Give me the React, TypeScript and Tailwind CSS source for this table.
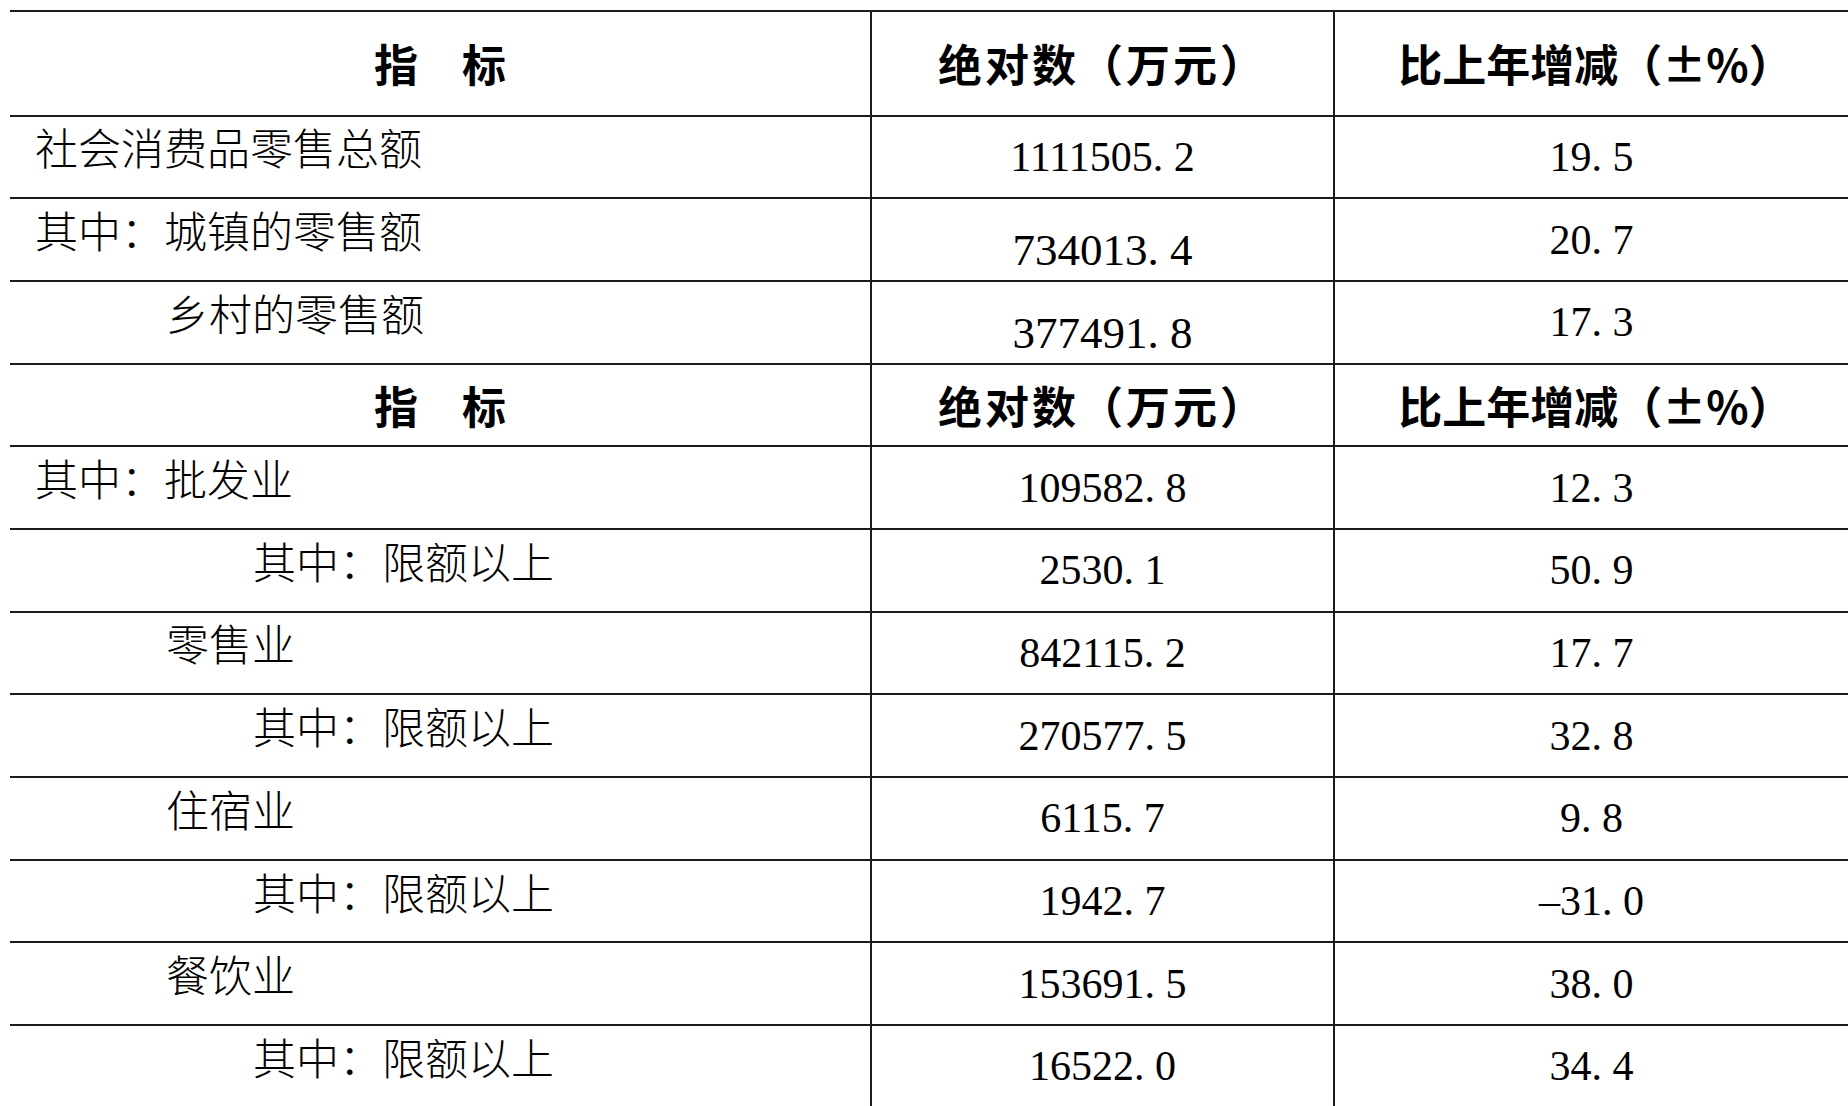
import React from "react";

type RowData = {
  label: string;
  indent?: 0 | 3 | 5;
  num: string;
  pct: string;
  big?: boolean;
};

const CJK = "font-['Noto_Sans_CJK_SC','Noto_Sans',sans-serif]";
const NUM = "font-['Liberation_Serif','DejaVu_Serif',serif]";

function Num({ value, className }: { value: string; className?: string }) {
  const parts = value.split(".");
  return (
    <span className={`${NUM} whitespace-nowrap ${className ?? ""}`}>
      {parts[0]}
      {parts.length > 1 && (
        <>
          <span className="inline-block w-[0.5em] text-left">.</span>
          {parts[1]}
        </>
      )}
    </span>
  );
}

function HeaderRow({ tall }: { tall?: boolean }) {
  return (
    <div
      className={`flex border-b-2 border-[#1c1c1c] ${
        tall ? "h-[107px] border-t-2" : "h-[82.7px]"
      }`}
    >
      <div className={`w-[860px] flex items-center justify-center ${CJK} font-bold text-[44px] text-black`}>
        指　标
      </div>
      <div className={`w-[463px] border-l-2 border-[#1c1c1c] flex items-center justify-center tracking-[3px] ${CJK} font-bold text-[44px] text-black`}>
        绝对数（万元）
      </div>
      <div className={`flex-1 border-l-2 border-[#1c1c1c] flex items-center justify-center pl-[8px] ${CJK} font-bold text-[44px] text-black`}>
        比上年增减（±%）
      </div>
    </div>
  );
}

function DataRow({ row }: { row: RowData }) {
  const indentClass =
    row.indent === 5 ? "pl-[243px]" : row.indent === 3 ? "pl-[156px]" : "pl-[25px]";
  return (
    <div className="flex h-[82.7px] border-b-2 border-[#1c1c1c]">
      <div
        className={`w-[860px] flex items-center pb-[20px] ${indentClass} ${CJK} font-light text-[43px] leading-none text-black whitespace-nowrap`}
      >
        {row.label}
      </div>
      <div
        className={`w-[463px] border-l-2 border-[#1c1c1c] flex items-center justify-center text-black ${
          row.big ? "pt-[22px] text-[45px]" : "text-[42px]"
        }`}
      >
        <Num value={row.num} className="leading-none" />
      </div>
      <div className="flex-1 border-l-2 border-[#1c1c1c] flex items-center justify-center text-black text-[42px]">
        <Num value={row.pct} className="leading-none" />
      </div>
    </div>
  );
}

const group1: RowData[] = [
  { label: "社会消费品零售总额", num: "1111505.2", pct: "19.5" },
  { label: "其中：城镇的零售额", num: "734013.4", pct: "20.7", big: true },
  { label: "乡村的零售额", indent: 3, num: "377491.8", pct: "17.3", big: true },
];

const group2: RowData[] = [
  { label: "其中：批发业", num: "109582.8", pct: "12.3" },
  { label: "其中：限额以上", indent: 5, num: "2530.1", pct: "50.9" },
  { label: "零售业", indent: 3, num: "842115.2", pct: "17.7" },
  { label: "其中：限额以上", indent: 5, num: "270577.5", pct: "32.8" },
  { label: "住宿业", indent: 3, num: "6115.7", pct: "9.8" },
  { label: "其中：限额以上", indent: 5, num: "1942.7", pct: "–31.0" },
  { label: "餐饮业", indent: 3, num: "153691.5", pct: "38.0" },
  { label: "其中：限额以上", indent: 5, num: "16522.0", pct: "34.4" },
];

export default function App() {
  return (
    <div className="w-[1848px] h-[1106px] overflow-hidden bg-white">
      <div className="ml-[10px] mt-[9.5px] w-[1838px] flex flex-col">
        <HeaderRow tall />
        {group1.map((r, i) => (
          <DataRow key={"a" + i} row={r} />
        ))}
        <HeaderRow />
        {group2.map((r, i) => (
          <DataRow key={"b" + i} row={r} />
        ))}
      </div>
    </div>
  );
}
